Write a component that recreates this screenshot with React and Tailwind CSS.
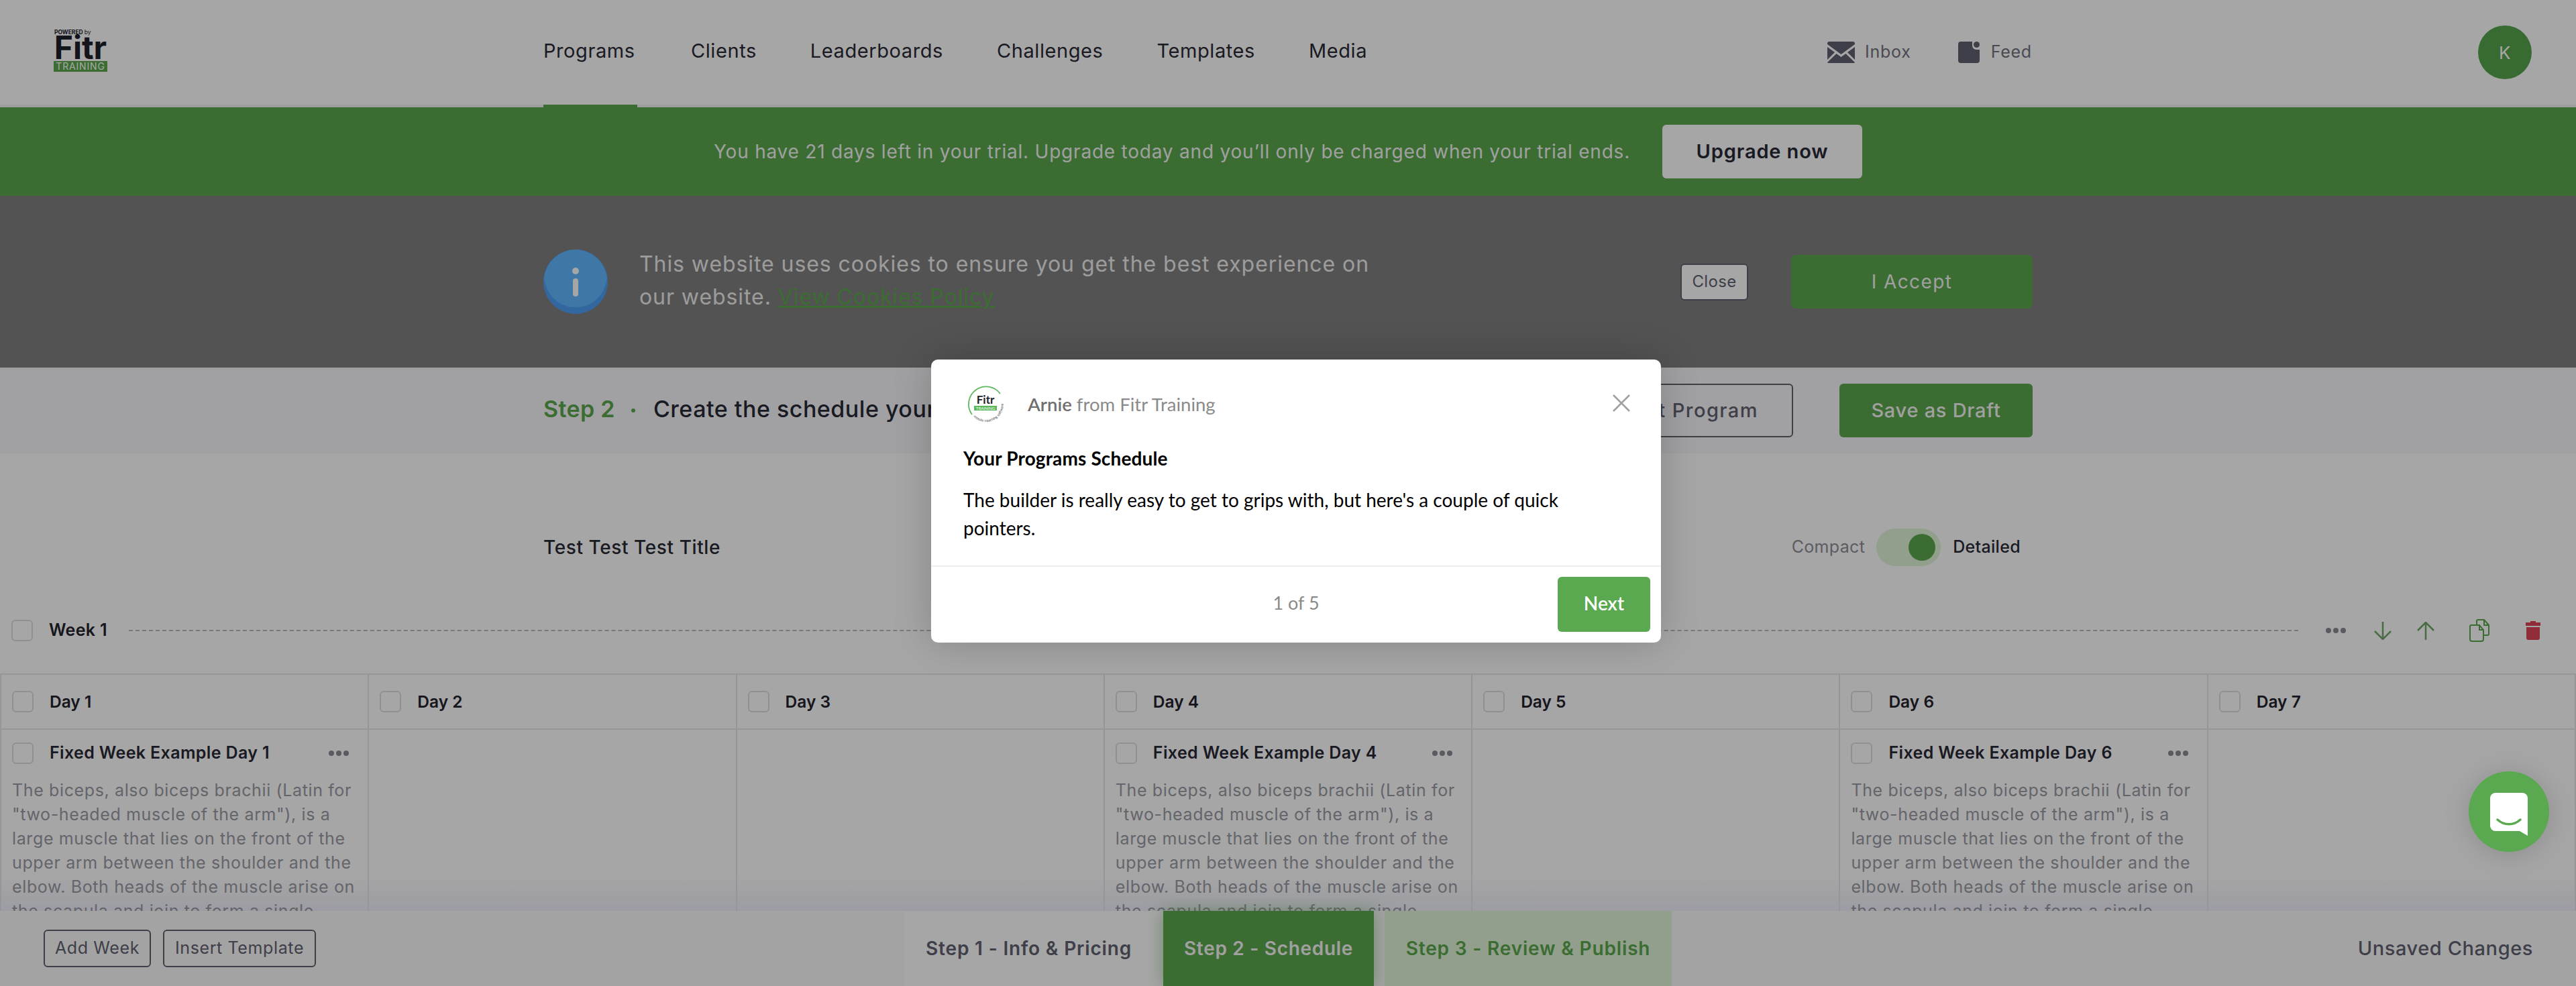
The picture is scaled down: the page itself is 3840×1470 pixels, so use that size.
import React from "react";

const Box = ({ className = "" }) => (
  <span className={"block w-[32px] h-[32px] shrink-0 rounded-[6px] border-2 border-[#dcdde4] " + className} />
);

const Dots = ({ className = "" }) => (
  <span className={"flex gap-[3px] items-center " + className}>
    <i className="block w-[8px] h-[8px] rounded-full bg-[#8a8c96]" />
    <i className="block w-[8px] h-[8px] rounded-full bg-[#8a8c96]" />
    <i className="block w-[8px] h-[8px] rounded-full bg-[#8a8c96]" />
  </span>
);

const bicepsLines = [
  "The biceps, also biceps brachii (Latin for",
  "\"two-headed muscle of the arm\"), is a",
  "large muscle that lies on the front of the",
  "upper arm between the shoulder and the",
  "elbow. Both heads of the muscle arise on",
  "the scapula and join to form a single",
];

const days = [
  { n: 1, item: true },
  { n: 2 },
  { n: 3 },
  { n: 4, item: true },
  { n: 5 },
  { n: 6, item: true },
  { n: 7 },
];

const DayHead = ({ n }) => (
  <div className="h-[80px] flex items-center pl-[16px] border-r-2 border-[#e6e7ea]">
    <Box />
    <span className="ml-[24px] text-[24.5px] font-semibold text-[#22222c] tracking-normal">Day {n}</span>
  </div>
);

const DayBody = ({ n, item }) => (
  <div className="min-h-[300px] px-[16px] pt-[19px] border-r-2 border-[#e6e7ea]">
    {item && (
      <>
        <div className="flex items-center h-[32px]">
          <Box />
          <span className="ml-[24px] text-[25px] font-semibold text-[#282835] whitespace-nowrap tracking-[0.015em]">
            Fixed Week Example Day {n}
          </span>
          <Dots className="ml-auto mr-[12px]" />
        </div>
        <p className="mt-[21px] text-[25px] leading-[36px] tracking-[0.025em] text-[#9a9ba5] whitespace-nowrap">
          {bicepsLines.map((l) => (
            <span key={l} className="block">{l}</span>
          ))}
        </p>
      </>
    )}
  </div>
);

const Logo = () => (
  <div className="w-[80px] flex flex-col items-stretch text-[#20202a]">
    <span className="h-[10px] text-[8.5px] leading-[10px] font-bold whitespace-nowrap tracking-normal pl-[1px]">POWERED <span className="font-normal">by</span></span>
    <span className="h-[36px] text-[48px] leading-[36px] font-bold text-center tracking-normal">Fitr</span>
    <span className="mt-[2px] h-[16px] bg-[#5ba84d] text-white text-[14px] leading-[16px] text-center tracking-[0.06em]">TRAINING</span>
  </div>
);

const Envelope = () => (
  <svg width="41" height="32" viewBox="0 0 41 32" className="shrink-0">
    <path fill="#616170" d="M3 0h35a3 3 0 0 1 3 3v1L20.500 19 0 4V3a3 3 0 0 1 3-3Z" />
    <path fill="#616170" d="M0 8l11 8L0 27ZM41 8 30 16l11 11Z" />
    <path fill="#616170" d="M13.500 18 20.500 23 27.500 18 41 31a3 3 0 0 1-3 1H3a3 3 0 0 1-3-1Z" />
  </svg>
);

const FeedIcon = () => (
  <svg width="32" height="32" viewBox="0 0 32 32" className="shrink-0">
    <path fill="#616170" d="M4 0h17v6a6 6 0 0 0 6 6h5v16a4 4 0 0 1-4 4H4a4 4 0 0 1-4-4V4a4 4 0 0 1 4-4Z" />
    <circle cx="27.500" cy="4.500" r="4.500" fill="#616170" />
  </svg>
);

const InfoIcon = () => (
  <svg width="96" height="96" viewBox="0 0 96 96" className="shrink-0">
    <circle cx="48" cy="48" r="48" fill="#4f9ff5" />
    <path fill="#61b9ff" d="M48 0a48 48 0 0 1 47 42c-3 26-22 44-47 44S4 68 1 42A48 48 0 0 1 48 0Z" />
    <circle cx="48" cy="32" r="5" fill="#fff" />
    <rect x="44" y="43" width="8" height="27" rx="4" fill="#fff" />
  </svg>
);

const Arrow = ({ up }) => (
  <svg width="26" height="27" viewBox="0 0 26 27" fill="none" stroke="#6fa866" strokeWidth="2.500" className={up ? "shrink-0 rotate-180" : "shrink-0"}>
    <path d="M13 0v26M1 14l12 12 12-12" />
  </svg>
);

const CopyIcon = () => (
  <svg width="30" height="34" viewBox="0 0 30 34" fill="none" stroke="#5ba84d" strokeWidth="2" className="shrink-0">
    <path d="M11 9V3a2 2 0 0 1 2-2h9l7 8v13a2 2 0 0 1-2 2h-6" />
    <path d="M22 1v8h7" />
    <path d="M3 9h12l6 7v14a3 3 0 0 1-3 3H4a3 3 0 0 1-3-3V11a2 2 0 0 1 2-2Z" />
    <path d="M15 9v7h6" />
  </svg>
);

const TrashIcon = () => (
  <svg width="22" height="28" viewBox="0 0 22 28" className="shrink-0">
    <path fill="#dc4456" d="M7 0h8v2h7v5H0V2h7ZM1 9h20v16a3 3 0 0 1-3 3H4a3 3 0 0 1-3-3Z" />
  </svg>
);

const ChatIcon = () => (
  <svg width="56" height="64" viewBox="0 0 56 64" className="shrink-0">
    <path fill="#fff" d="M8 0h40a8 8 0 0 1 8 8v56L44 57H8a8 8 0 0 1-8-8V8a8 8 0 0 1 8-8Z" />
    <path fill="none" stroke="#5aa84f" strokeWidth="3.500" strokeLinecap="round" d="M11 40c10 9 24 9 34 0" />
  </svg>
);

const ArnieLogo = () => (
  <svg width="56" height="56" viewBox="0 0 56 56" className="shrink-0">
    <defs>
      <path id="arnie-arc" d="M10 48A26 26 0 0 0 54 24" />
    </defs>
    <path fill="none" stroke="#5cb85c" strokeWidth="1.800" d="M8 45A26 26 0 1 1 50 14" />
    <text x="28" y="29" textAnchor="middle" fontSize="17" fontWeight="700" fill="#20202a">Fitr</text>
    <rect x="11" y="32" width="34" height="7" fill="#5cb85c" />
    <text x="28" y="38" textAnchor="middle" fontSize="6" fill="#fff">TRAINING</text>
    <text fontSize="5.500" fill="#444">
      <textPath href="#arnie-arc">remote coaching software</textPath>
    </text>
  </svg>
);

export default function App() {
  return (
    <div className="relative w-[3840px] h-[1470px] overflow-hidden bg-white flex flex-col [font-family:Inter,sans-serif] text-[#282835] tracking-[0.02em]">
      {/* Top navigation */}
      <header className="h-[160px] shrink-0 border-b-4 border-[#f2f2f2] flex bg-white">
        <div className="w-[810px] pl-[80px] pt-[43px]">
          <Logo />
        </div>
        <nav className="w-[1914px] flex gap-[80px] text-[29px] tracking-[0.02em] text-[#2a2a36]">
          {["Programs", "Clients", "Leaderboards", "Challenges", "Templates", "Media"].map((t, i) => (
            <a
              key={t}
              className={
                "h-[160px] flex items-center pb-[4px] whitespace-nowrap border-b-4 " +
                (i === 0 ? "w-[140px] border-[#5ba84d]" : "border-transparent")
              }
            >
              {t}
            </a>
          ))}
        </nav>
        <div className="flex items-center h-[156px] text-[25px] tracking-[0.03em] text-[#72727e]">
          <Envelope />
          <span className="ml-[15px]">Inbox</span>
          <span className="ml-[70px]"><FeedIcon /></span>
          <span className="ml-[17px]">Feed</span>
        </div>
        <div className="ml-auto mr-[66px] mt-[38px] w-[80px] h-[80px] rounded-full bg-[#57a54d] text-white text-[26px] flex items-center justify-center">
          K
        </div>
      </header>

      {/* Trial banner */}
      <div className="h-[132px] shrink-0 bg-[#5ba84d] flex items-center justify-center gap-[48px]">
        <span className="text-[28px] tracking-[0.028em] text-[#f6f6f6] whitespace-nowrap">
          You have 21 days left in your trial. Upgrade today and you’ll only be charged when your trial ends.
        </span>
        <button className="w-[298px] h-[80px] rounded-[6px] bg-white text-[29px] tracking-[0.03em] font-semibold text-[#282835]">
          Upgrade now
        </button>
      </div>

      {/* Cookie bar */}
      <div className="h-[256px] shrink-0 bg-[#808080]">
        <div className="w-[2220px] mx-auto h-[256px] flex items-center">
          <InfoIcon />
          <p className="ml-[47px] w-[1200px] text-[32px] leading-[49px] tracking-[0.029em] text-[#f0f0f0] -mt-[4px]">
            This website uses cookies to ensure you get the best experience on
            <br />
            our website. <a className="text-[#5ba84d] underline">View Cookies Policy</a>
          </p>
          <button className="ml-auto w-[101px] h-[55px] rounded-[6px] border-2 border-[#616170] bg-white text-[24px] text-[#616170]">
            Close
          </button>
          <button className="ml-[64px] w-[360px] h-[80px] rounded-[8px] bg-[#5ba84d] text-[28px] tracking-[0.05em] text-[#f6f6f6]">
            I Accept
          </button>
        </div>
      </div>

      {/* Program builder */}
      <main className="relative flex-1 min-h-0 overflow-hidden">
        <div className="absolute inset-x-0 bottom-0 h-[56px] bg-gradient-to-b from-transparent to-[#f0f1fa]" />

        <div className="h-[128px] bg-[#f7f8fb]">
          <div className="w-[2220px] mx-auto pt-[24px] flex items-center">
            <span className="mb-[6px] text-[34px] tracking-[0.01em] font-semibold text-[#5ba84d] whitespace-nowrap">Step 2</span>
            <span className="ml-[24px] w-[6px] h-[6px] rounded-full bg-[#5ba84d]" />
            <span className="mb-[6px] ml-[27px] w-[1000px] text-[34px] tracking-[0.015em] font-medium text-[#282835] whitespace-nowrap">
              Create the schedule your clients will follow
            </span>
            <button className="ml-auto h-[80px] w-[340px] pr-[50px] text-right rounded-[6px] border-2 border-[#616170] text-[29px] tracking-[0.05em] font-medium text-[#616170]">
              Exit Program
            </button>
            <button className="ml-[69px] h-[80px] w-[288px] rounded-[6px] bg-[#5ba84d] text-[29px] tracking-[0.025em] font-medium text-[#f6f6f6]">
              Save as Draft
            </button>
          </div>
        </div>

        <div className="w-[2220px] mx-auto mt-[112px] h-[56px] flex items-center">
          <span className="text-[28px] tracking-[0.021em] font-medium text-[#282835]">Test Test Test Title</span>
          <div className="ml-auto flex items-center mr-[18px]">
            <span className="text-[25px] text-[#8e8e98]">Compact</span>
            <span className="ml-[17px] w-[96px] h-[56px] rounded-[28px] bg-[#dff5d8] flex items-center justify-end pr-[8px]">
              <i className="block w-[40px] h-[40px] rounded-full bg-[#5ba84d]" />
            </span>
            <span className="ml-[18px] text-[25px] font-medium text-[#282835]">Detailed</span>
          </div>
        </div>

        {/* Week heading */}
        <div className="mt-[64px] h-[64px] flex items-center pl-[17px] pr-[53px]">
          <Box />
          <span className="ml-[24px] text-[25px] font-semibold text-[#22222c] whitespace-nowrap">Week 1</span>
          <span className="ml-[32px] flex-1 border-t-2 border-dashed border-[#b8bac4]" />
          <Dots className="ml-[41px]" />
          <span className="ml-[42px]"><Arrow /></span>
          <span className="ml-[38px]"><Arrow up /></span>
          <span className="ml-[52px]"><CopyIcon /></span>
          <span className="ml-[54px]"><TrashIcon /></span>
        </div>

        {/* Week grid */}
        <div className="relative mt-[32px] grid grid-cols-7 border-t-2 border-l-2 border-[#e6e7ea]">
          {days.map((d) => (
            <DayHead key={d.n} n={d.n} />
          ))}
          <div className="col-span-7 border-t-2 border-[#e6e7ea]" />
          {days.map((d) => (
            <DayBody key={d.n} n={d.n} item={d.item} />
          ))}
        </div>
      </main>

      {/* Bottom bar */}
      <footer className="h-[112px] shrink-0 flex bg-[#fbfbfb] relative">
        <div className="w-[1348px] pl-[65px] flex items-center gap-[18px]">
          <button className="w-[160px] h-[56px] rounded-[6px] border-2 border-[#616170] text-[25px] tracking-[0.025em] text-[#616170] whitespace-nowrap">Add Week</button>
          <button className="w-[228px] h-[56px] rounded-[6px] border-2 border-[#616170] text-[25px] tracking-[0.025em] text-[#616170] whitespace-nowrap">Insert Template</button>
        </div>
        <div className="w-[386px] pl-[32px] bg-white flex items-center text-[28px] tracking-[0.03em] font-semibold text-[#616170] whitespace-nowrap">
          Step 1 - Info &amp; Pricing
        </div>
        <div className="w-[314px] bg-[#5ba84d] flex items-center justify-center text-[28px] tracking-[0.025em] font-semibold text-[#f6f6f6] whitespace-nowrap shadow-[0_0_24px_rgba(91,168,77,0.5)]">
          Step 2 - Schedule
        </div>
        <div className="ml-[16px] w-[428px] bg-[#dff5d8] flex items-center justify-center text-[28px] tracking-[0.03em] font-semibold text-[#5ba84d] whitespace-nowrap">
          Step 3 - Review &amp; Publish
        </div>
        <div className="ml-auto mr-[64px] flex items-center text-[29px] tracking-[0.02em] font-medium text-[#616170]">
          Unsaved Changes
        </div>
      </footer>

      {/* Dim layer */}
      <div className="absolute inset-0 bg-black/35" />

      {/* Tour card */}
      <div className="absolute left-[1388px] top-[536px] w-[1088px] h-[422px] rounded-[10px] bg-white shadow-[0_0_60px_rgba(0,0,0,0.2)] flex flex-col [font-family:Lato,sans-serif] tracking-normal text-black">
        <div className="h-[130px] pl-[53px] pt-[37px] pr-[46px] flex items-start shrink-0">
          <ArnieLogo />
          <span className="ml-[35px] mt-[9px] text-[27.5px] text-[#8a8a8a] whitespace-nowrap">
            <b className="font-semibold text-[#6f6f6f]">Arnie</b> from Fitr Training
          </span>
          <svg width="26" height="26" viewBox="0 0 26 26" className="ml-auto mt-[15px]" stroke="#a0a0a0" strokeWidth="2.500" fill="none">
            <path d="M1 1l24 24M25 1 1 25" />
          </svg>
        </div>
        <div className="px-[48px] flex-1">
          <h2 className="text-[28px] font-bold leading-[34px] tracking-[0.005em]">Your Programs Schedule</h2>
          <p className="mt-[24px] text-[28px] leading-[42px]">
            The builder is really easy to get to grips with, but here's a couple of quick pointers.
          </p>
        </div>
        <div className="h-[115px] shrink-0 border-t-2 border-[#eeeeee] relative flex items-center justify-center pb-[4px]">
          <span className="text-[27px] text-[#8a8a8a]">1 of 5</span>
          <button className="absolute right-[16px] top-[15px] w-[138px] h-[82px] pb-[4px] rounded-[6px] bg-[#5aa84f] text-[28px] font-semibold text-white">
            Next
          </button>
        </div>
      </div>

      {/* Support launcher */}
      <div className="absolute left-[3680px] top-[1150px] w-[120px] h-[120px] rounded-full bg-[#5aa84f] shadow-[0_4px_40px_rgba(0,0,0,0.15)] flex items-center justify-center pt-[8px]">
        <ChatIcon />
      </div>
    </div>
  );
}
